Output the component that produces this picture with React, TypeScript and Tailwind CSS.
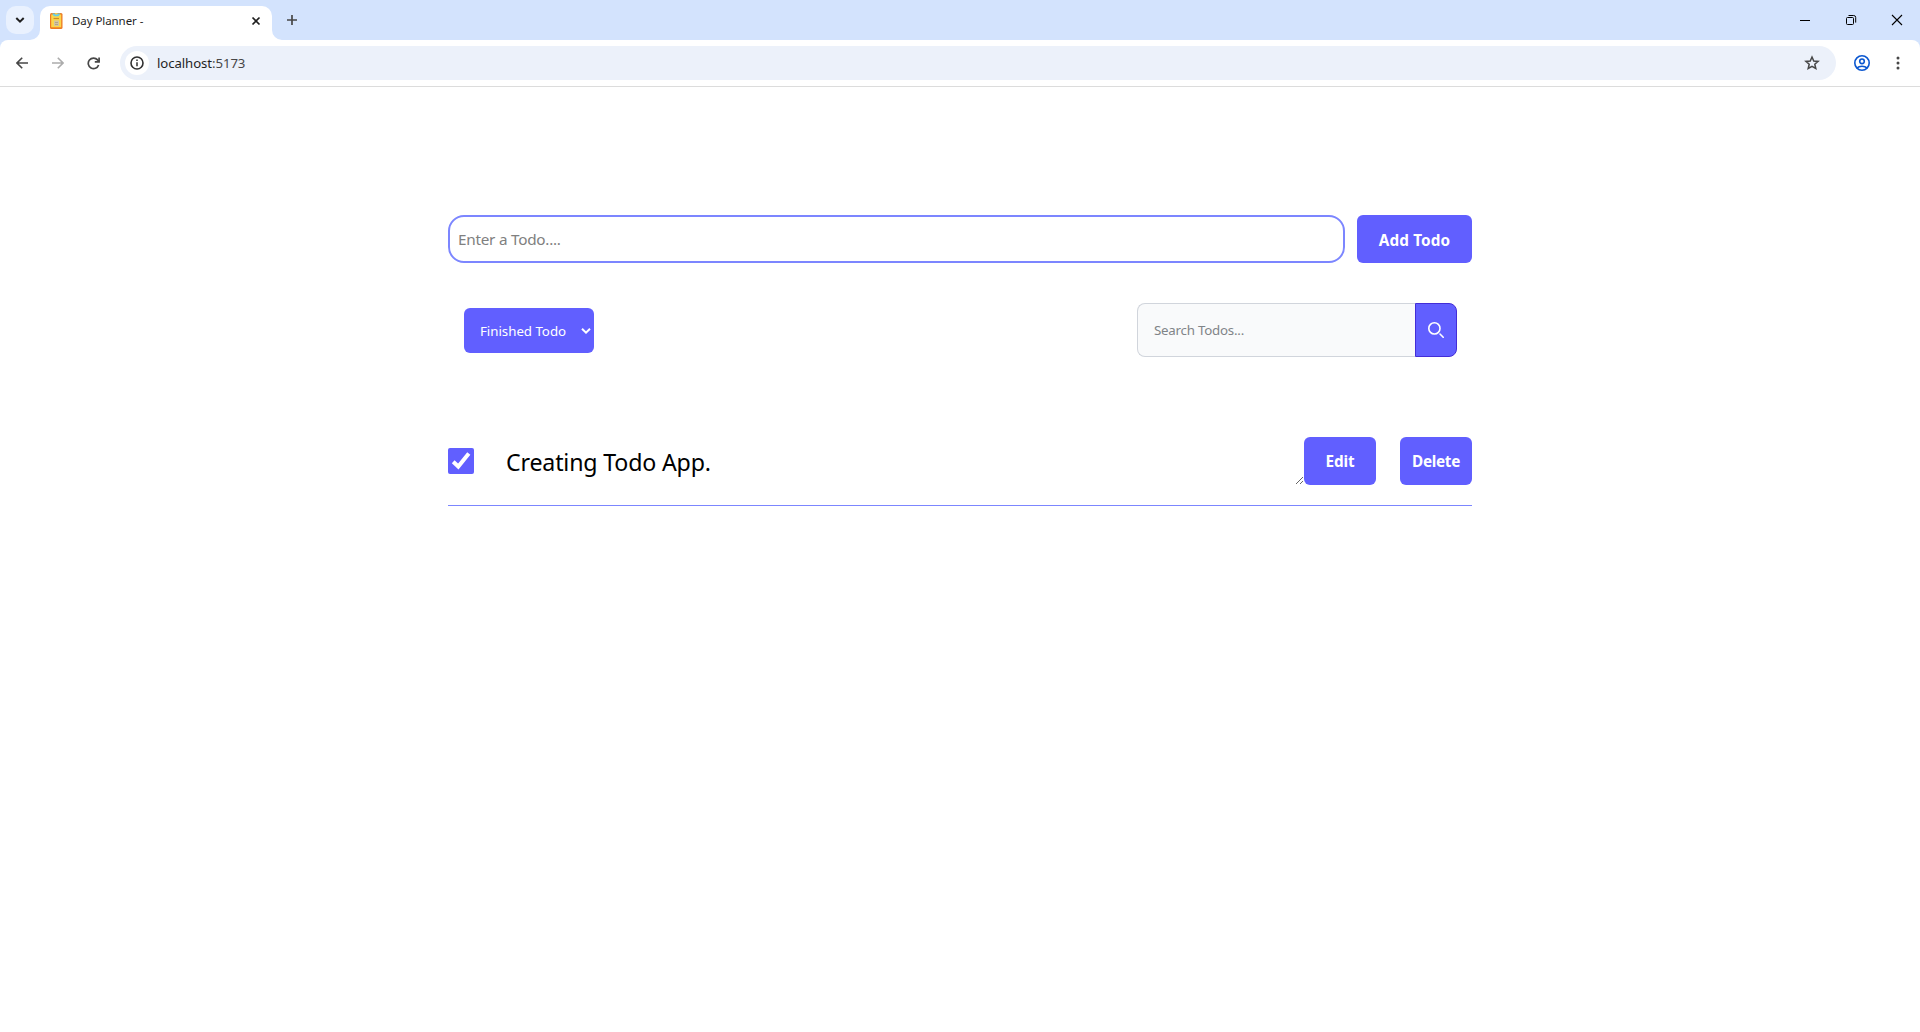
import React from "react";

function TabBar() {
  return (
    <div className="flex h-10 bg-[#d3e3fd] pl-1.5 pr-0">
      <button aria-label="Search tabs" className="mt-1.5 flex h-7 w-7 items-center justify-center rounded-[10px] bg-[#e9f1fe]">
        <svg width="10" height="8" viewBox="0 0 10 8" fill="none" stroke="#1f1f1f" strokeWidth="2">
          <path d="M1.3 2 5 5.6 8.7 2" />
        </svg>
      </button>
      <div className="relative ml-1.5 mt-1.5 flex h-[34px] w-[232px] items-center rounded-t-[10px] bg-white pl-[9px] pr-[10px]">
        <svg width="10" height="10" viewBox="0 0 10 10" className="absolute -left-[10px] bottom-0 fill-white">
          <path d="M10 0A10 10 0 0 1 0 10h10Z" />
        </svg>
        <svg width="16" height="16" viewBox="0 0 16 16" className="mb-[5px]">
          <rect x="1" y="0" width="12.500" height="16" rx="1.500" fill="#ee7a22" />
          <rect x="2.200" y="1.500" width="10" height="12.800" fill="#fbd54a" />
          <path d="M3 .5h8.500L9.500 3.200H5z" fill="#64cfe8" />
          <rect x="6" y="0" width="2.500" height="1.500" fill="#f7c948" />
          <path d="M4.500 5.500h5.500" stroke="#c98a2a" strokeWidth="1.200" />
          <rect x="5" y="7.500" width="5" height="5.500" fill="#d3c5a0" />
          <path d="M6 9.500h3M6 11.500h3" stroke="#b3a486" />
        </svg>
        <span className="mb-[5px] ml-[7px] text-[11.5px] tracking-[-0.07px] text-[#1f1f1f]">Day Planner -</span>
        <svg width="10" height="10" viewBox="0 0 10 10" className="mb-[5px] ml-auto mr-[1px]" stroke="#1f1f1f" strokeWidth="1.700">
          <path d="m1.500 1.500 7 7M8.500 1.500l-7 7" />
        </svg>
      </div>
      <svg width="10" height="10" viewBox="0 0 10 10" className="mt-[30px] shrink-0 fill-white">
        <path d="M0 0A10 10 0 0 0 10 10H0Z" />
      </svg>
      <svg width="12" height="12" viewBox="0 0 12 12" className="ml-1 mt-[14px]" stroke="#474747" strokeWidth="1.700">
        <path d="M6 1v10M1 6h10" />
      </svg>
      <div className="ml-auto flex">
        <span className="flex h-10 w-[46px] items-center justify-center">
          <span className="h-px w-[10px] bg-black" />
        </span>
        <span className="flex h-10 w-[46px] items-center justify-center">
          <svg width="12" height="12" viewBox="0 0 12 12" fill="none" stroke="#000">
            <rect x="1.5" y="3.5" width="7" height="7" rx="1" />
            <path d="M3.5 1.5H8.7a2 2 0 0 1 2 2V8.6" />
          </svg>
        </span>
        <span className="flex h-10 w-[46px] items-center justify-center">
          <svg width="12" height="12" viewBox="0 0 12 12" stroke="#000" strokeWidth="1.1">
            <path d="m1 1 10 10M11 1 1 11" />
          </svg>
        </span>
      </div>
    </div>
  );
}

function Toolbar() {
  return (
    <div className="bg-[#d3e3fd]">
      <div className="flex h-[47px] items-center rounded-t-[8px] border-b border-[#dcdcdc] bg-white pl-4 pr-[21px]">
        <svg width="12" height="12" viewBox="0 0 12 12" fill="none" stroke="#474747" strokeWidth="1.6">
          <path d="M12 6H1.2M6.2.8 1 6l5.200 5.200" />
        </svg>
        <svg width="12" height="12" viewBox="0 0 12 12" className="ml-6" fill="none" stroke="#acacac" strokeWidth="1.6">
          <path d="M0 6h10.800M5.800.8 11 6l-5.200 5.200" />
        </svg>
        <svg width="13" height="13" viewBox="0 0 13 13" className="ml-[23px] mr-px" fill="none" stroke="#474747" strokeWidth="1.700">
          <path d="M11.600 8A5.300 5.300 0 1 1 10.600 2.900L12 4.400" />
          <path d="M12.100.6v4.300H7.800" />
        </svg>
        <div className="ml-[19px] flex h-[34px] flex-1 items-center rounded-full bg-[#ecf1fa] pl-[5px] pr-4">
          <span className="flex h-6 w-6 items-center justify-center rounded-full bg-white">
            <svg width="14" height="14" viewBox="0 0 14 14" fill="none" stroke="#303030">
              <circle cx="7" cy="7" r="6" strokeWidth="1.6" />
              <path d="M7 6.200v4M7 3.600v1.500" strokeWidth="1.500" />
            </svg>
          </span>
          <span className="ml-2 mt-px text-[13.2px] tracking-[-0.08px] text-[#1f1f1f]">
            localhost<span className="text-[#474747]">:5173</span>
          </span>
          <svg width="16" height="16" viewBox="0 0 16 16" className="ml-auto" fill="none" stroke="#474747" strokeWidth="1.500">
            <path d="m8 2 1.750 4 4.350.4-3.300 2.850 1 4.250L8 11.250 4.200 13.500l1-4.250L1.900 6.400 6.250 6Z" />
          </svg>
        </div>
        <svg width="18" height="18" viewBox="0 0 18 18" className="ml-[17px]" fill="none" stroke="#0b57d0" strokeWidth="1.600">
          <circle cx="9" cy="9" r="7.200" />
          <circle cx="9" cy="7.300" r="2.300" />
          <path d="M3.700 14.200c1.600-1.500 3.400-2 5.300-2s3.700.5 5.300 2" />
        </svg>
        <svg width="18" height="16" viewBox="0 0 18 16" className="-mr-2 ml-[18px] fill-[#474747]">
          <circle cx="9" cy="3" r="1.500" />
          <circle cx="9" cy="8" r="1.500" />
          <circle cx="9" cy="13" r="1.500" />
        </svg>
      </div>
    </div>
  );
}

function ActionButton({ children, className }: { children: React.ReactNode; className: string }) {
  return (
    <button className={`h-12 shrink-0 rounded-md bg-[#615fff] font-bold text-white ${className}`}>
      {children}
    </button>
  );
}

export default function App() {
  return (
    <div className="h-[1032px] overflow-hidden bg-white font-['Noto_Sans','Open_Sans',sans-serif]">
      <TabBar />
      <Toolbar />
      <main className="mx-auto w-[1024px] pt-32">
        <div className="flex gap-3">
          <input
            placeholder="Enter a Todo...."
            className="h-12 min-w-0 flex-1 rounded-2xl border-2 border-[#7c86ff] px-2 text-[15.3px] tracking-[-0.25px] outline-none placeholder:text-[#808080]"
          />
          <ActionButton className="w-[115px] pt-0.5 text-[15.3px] tracking-[0.12px]">Add Todo</ActionButton>
        </div>
        <div className="mt-10 flex items-center justify-between pl-4 pr-[15px]">
          <button className="mt-[1px] flex h-[45px] w-[130px] items-center justify-between rounded-md bg-[#615fff] pl-4 pr-[3px] text-[13.3px] text-white">
            <span className="mt-[3px] whitespace-nowrap tracking-[-0.03px]">Finished Todo</span>
            <svg width="10" height="8" viewBox="0 0 10 8" fill="none" stroke="white" strokeWidth="2">
              <path d="M1 1.800 5 5.600 9 1.800" />
            </svg>
          </button>
          <div className="flex h-[54px] w-80">
            <input
              placeholder="Search Todos..."
              className="min-w-0 flex-1 rounded-l-lg border border-r-0 border-[#d1d5dc] bg-[#f9fafb] px-4 pt-px text-[13.3px] tracking-[-0.22px] outline-none placeholder:text-[#808488]"
            />
            <button aria-label="Search" className="flex w-[42px] items-center justify-center rounded-r-lg border border-[#432dd7] bg-[#615fff]">
              <svg width="16" height="16" viewBox="0 0 20 20" fill="none" stroke="white" strokeWidth="2" strokeLinecap="round">
                <path d="m19 19-4-4m0-7A7 7 0 1 1 1 8a7 7 0 0 1 14 0Z" />
              </svg>
            </button>
          </div>
        </div>
        <div className="mt-20 flex h-[69px] items-start border-b border-[#7c86ff]">
          <span role="checkbox" aria-checked="true" className="mt-[11px] flex h-[26px] w-[26px] items-center justify-center rounded-[2px] bg-[#615fff]">
            <svg width="20" height="20" viewBox="0 0 20 20" fill="none" stroke="white" strokeWidth="4">
              <path d="M2.200 10.800 7.300 15.500 17.800 2.500" />
            </svg>
          </span>
          <div className="ml-8 flex h-12 flex-1 items-end justify-between">
            <span className="mb-[5px] text-[23.2px] leading-[36px] tracking-[-0.18px] text-black">Creating Todo App.</span>
            <svg width="9" height="9" viewBox="0 0 9 9" fill="none" stroke="#666">
              <path d="m1 8 7-7M5 8l3-3" />
            </svg>
          </div>
          <ActionButton className="w-[72px] pt-px text-[15.3px] tracking-[-0.1px]">Edit</ActionButton>
          <ActionButton className="ml-6 w-[72px] pt-px text-[15.3px] tracking-[-0.3px]">Delete</ActionButton>
        </div>
      </main>
    </div>
  );
}
